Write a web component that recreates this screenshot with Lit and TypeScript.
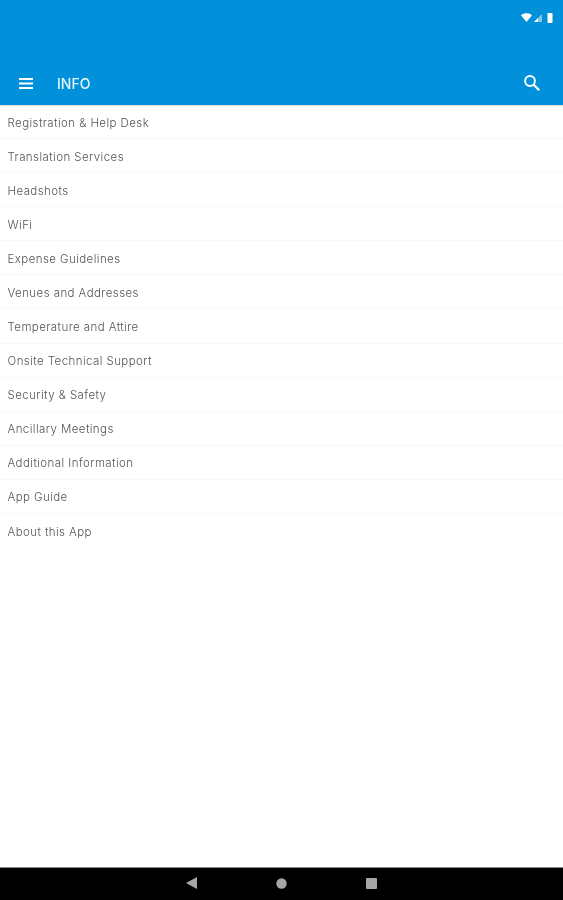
import { LitElement, css, html } from "lit";
import { customElement } from "lit/decorators.js";

const ITEMS = [
    "Registration & Help Desk",
    "Translation Services",
    "Headshots",
    "WiFi",
    "Expense Guidelines",
    "Venues and Addresses",
    "Temperature and Attire",
    "Onsite Technical Support",
    "Security & Safety",
    "Ancillary Meetings",
    "Additional Information",
    "App Guide",
    "About this App",
];

@customElement("app-root")
export class AppRoot extends LitElement {
    render() {
        return html`
            <div class="screen">
                <header class="appbar">
                    <div class="status">
                        <svg width="32" height="10" viewBox="0 0 32 10">
                            <path d="M0 2.2C3.2-.4 7.8-.4 11 2.2L5.5 9Z" fill="#fff" />
                            <path d="M21 9V1L13 9Z" fill="#fff" opacity=".5" />
                            <path d="M17 9V5L13 9Z" fill="#fff" />
                            <rect x="26.5" y="0" width="5" height="10" rx=".8" fill="#fff" />
                        </svg>
                    </div>
                    <div class="toolbar">
                        <svg class="menu" width="14" height="11" viewBox="0 0 14 11">
                            <path d="M0 0h14v2H0zM0 4.5h14v2H0zM0 9h14v2H0z" fill="#fff" />
                        </svg>
                        <span class="title">INFO</span>
                        <svg class="search" width="18" height="18" viewBox="0 0 18 18">
                            <circle cx="7" cy="7" r="4.9" fill="none" stroke="#fff" stroke-width="2" />
                            <path d="M10.6 10.6l5.6 5.6" fill="none" stroke="#fff" stroke-width="2.2" />
                        </svg>
                    </div>
                </header>
                <ul class="list">
                    ${ITEMS.map((item) => html`<li><span>${item}</span></li>`)}
                </ul>
                <nav class="navbar">
                    <svg width="11" height="12" viewBox="0 0 11 12"><path d="M11 0v12L0 6Z" fill="#a6a6a6" /></svg>
                    <svg width="11" height="11" viewBox="0 0 11 11"><circle cx="5.5" cy="5.5" r="5.2" fill="#a6a6a6" /></svg>
                    <svg width="11" height="11" viewBox="0 0 11 11"><rect width="11" height="11" rx="1" fill="#a6a6a6" /></svg>
                </nav>
            </div>
        `;
    }

    static styles = css`
        :host {
            display: block;
        }

        .screen {
            display: flex;
            flex-direction: column;
            height: 900px;
            background-color: #fff;
            font-family: "Inter", "Liberation Sans", sans-serif;
        }

        .appbar {
            flex: none;
            height: 105px;
            background-color: #0091da;
            box-shadow: 0 1px 1px rgba(0, 0, 0, 0.12);
            display: flex;
            flex-direction: column;
        }

        .status {
            display: flex;
            justify-content: flex-end;
            align-items: flex-start;
            padding: 13px 10px 0 0;
            height: 61px;
            box-sizing: border-box;
            filter: blur(0.4px);
        }

        .toolbar {
            display: flex;
            align-items: center;
            height: 44px;
            padding: 0 22px 0 19px;
            filter: blur(0.35px);
        }

        .title {
            margin-left: 24px;
            color: #e6f4fc;
            font-size: 14px;
            font-weight: 500;
        }

        .search {
            margin-left: auto;
        }

        .list {
            flex: 1;
            margin: 0;
            padding: 0;
            list-style: none;
        }

        li {
            height: 34.08px;
            box-sizing: border-box;
            padding: 2px 0 0 7.5px;
            display: flex;
            align-items: center;
            border-bottom: 1px solid #f8f8f8;
            color: #555;
            font-size: 11.5px;
            font-weight: 300;
            letter-spacing: 0.42px;
        }

        li span {
            filter: blur(0.35px);
        }

        li:last-child {
            border-bottom: none;
        }

        .navbar {
            flex: none;
            height: 33px;
            padding-bottom: 2px;
            background-color: #000;
            display: flex;
            align-items: center;
            justify-content: center;
            gap: 79px;
            border-top: 1px solid #888;
            box-sizing: border-box;
        }
    `;
}
